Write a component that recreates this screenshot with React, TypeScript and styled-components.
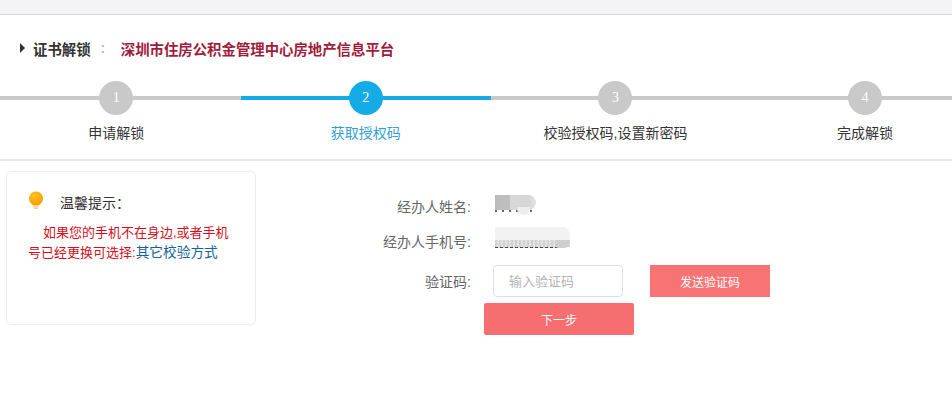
import React from 'react';
import styled, { createGlobalStyle } from 'styled-components';

const FONT = '"Liberation Sans", "Noto Sans CJK SC", sans-serif';

const Global = createGlobalStyle`
  html, body { margin: 0; padding: 0; background: #fff; }
  body { font-family: ${FONT}; overflow: hidden; }
  * { box-sizing: border-box; }
`;

const Page = styled.div`
  width: 952px;
  height: 411px;
  overflow: hidden;
`;

const TopStrip = styled.div`
  height: 15px;
  background: #f3f3f8;
  border-bottom: 1px solid #d6d6de;
`;

const TitleRow = styled.div`
  display: flex;
  align-items: center;
  height: 24px;
  margin-top: 21px;
  padding-left: 20px;
`;

const Arrow = styled.span`
  width: 0;
  height: 0;
  border-left: 5px solid #333;
  border-top: 5px solid transparent;
  border-bottom: 5px solid transparent;
  margin-right: 8px;
`;

const TitleText = styled.span`
  font-size: 14.4px;
  font-weight: 700;
  color: #333;
`;

const Colon = styled.span`
  font-size: 14px;
  font-weight: 700;
  color: #bbb;
  margin: 0 15.5px 0 10px;
`;

const PlatformName = styled.span`
  font-size: 14.4px;
  font-weight: 700;
  color: #a01c3c;
`;

const Steps = styled.div`
  display: flex;
  width: 1000px;
  margin: 21px 0 0 -8.7px;
  height: 80px;
  border-bottom: 2px solid #e6e6e6;
`;

const Step = styled.div<{ $active?: boolean }>`
  width: 249.67px;
  display: flex;
  flex-direction: column;
  align-items: center;
  background: linear-gradient(${p => (p.$active ? '#14ace6' : '#c9c9c9')}, ${p => (p.$active ? '#14ace6' : '#c9c9c9')}) no-repeat 0 15px / 100% 4px;
`;

const StepNumber = styled.div<{ $active?: boolean }>`
  width: 34px;
  height: 34px;
  border-radius: 50%;
  background: ${p => (p.$active ? '#14ace6' : '#c9c9c9')};
  color: #fff;
  font-family: "Liberation Serif", serif;
  font-size: 14px;
  line-height: 33px;
  text-align: center;
`;

const StepLabel = styled.div<{ $active?: boolean }>`
  margin-top: 8px;
  font-size: 14px;
  line-height: 20px;
  color: ${p => (p.$active ? '#2fa3cf' : '#333')};
`;

const Main = styled.div`
  display: flex;
  align-items: flex-start;
  padding: 10px 0 0 6px;
`;

const TipCard = styled.div`
  width: 250px;
  height: 154px;
  border: 1px solid #ececec;
  border-radius: 5px;
  padding: 19px 21px 0;
  flex-shrink: 0;
`;

const TipHead = styled.div`
  display: flex;
  align-items: flex-start;
  font-size: 14px;
  line-height: 24px;
  color: #333;
  gap: 16px;
  margin-bottom: 8px;
`;

const TipBody = styled.p`
  margin: 0;
  width: 204px;
  font-size: 13px;
  line-height: 20px;
  text-indent: 15px;
  color: #d40f1c;
`;

const TipLink = styled.a`
  display: inline-block;
  text-indent: 0;
  color: #17629c;
  font-size: 13.7px;
`;

const Form = styled.div`
  display: grid;
  grid-template-columns: 215px auto auto;
  grid-template-rows: 30px 40px 40px 36px;
  align-items: center;
  margin-top: 20px;
`;

const Label = styled.div`
  font-size: 14px;
  color: #666;
  text-align: right;
  grid-column: 1;
`;

const Value = styled.div<{ $lift: number }>`
  grid-column: 2 / span 2;
  margin: -${p => p.$lift}px 0 0 24px;
`;

/* blurred-out personal data, the reference only shows smudges here */
const Redacted = styled.div<{ $w: number; $h: number }>`
  position: relative;
  width: ${p => p.$w}px;
  height: ${p => p.$h}px;
  overflow: hidden;
`;

const NameBlur = styled.div`
  position: absolute;
  left: 0;
  right: 0;
  top: 0;
  height: 15px;
  border-radius: 0 8px 8px 0;
  background: linear-gradient(90deg, #bcbcbc 0, #c0c0c0 36%, #d8d8d8 38%, #d6d6d6 82%, #e4e4e4 100%);
`;

const NameDots = styled.div`
  position: absolute;
  left: 0;
  right: 0;
  top: 15px;
  height: 2px;
  background: repeating-linear-gradient(90deg, #666 0 2px, #fff 2px 7px);
`;

const NameFade = styled.div`
  position: absolute;
  right: 6px;
  top: 12px;
  width: 13px;
  height: 8px;
  border-radius: 0 0 7px 7px;
  background: #ededed;
`;

const PhoneBlur = styled.div`
  position: absolute;
  left: 0;
  right: 0;
  top: 0;
  height: 13px;
  border-radius: 0 8px 0 0;
  background: #f2f2f2;
`;

const PhoneSmear = styled.div`
  position: absolute;
  left: 0;
  right: 0;
  top: 13px;
  height: 7px;
  background: repeating-linear-gradient(90deg, #d2d2d2 0 2px, #e2e2e2 2px 4px);
`;

const PhoneDots = styled.div`
  position: absolute;
  left: 0;
  right: 12px;
  top: 20px;
  height: 1px;
  background: repeating-linear-gradient(90deg, #444 0 3px, #ddd 3px 5px);
`;

const PhoneEnd = styled.div`
  position: absolute;
  right: 0;
  top: 13px;
  width: 15px;
  height: 8px;
  border-radius: 0 0 6px 4px;
  background: #cfcfcf;
`;

const CodeInput = styled.input`
  grid-column: 2;
  margin-left: 22px;
  width: 130px;
  height: 32px;
  border: 1px solid #dedee6;
  border-radius: 4px;
  padding: 0 15px;
  font-family: ${FONT};
  font-size: 13px;
  outline: none;
  &::placeholder { color: #b4b4b4; }
`;

const SendButton = styled.button`
  grid-column: 3;
  margin-left: 27px;
  width: 120px;
  height: 32px;
  border: 0;
  background: #f87373;
  color: #fff;
  font-family: ${FONT};
  font-size: 12px;
  padding: 0;
`;

const NextButton = styled.button`
  grid-column: 2 / span 2;
  justify-self: start;
  margin-left: 13px;
  width: 150px;
  height: 32px;
  border: 0;
  border-radius: 2px;
  background: #f76e71;
  color: #fff;
  font-family: ${FONT};
  font-size: 12px;
  padding: 0;
`;

const Bulb = () => (
  <svg width="16" height="18" viewBox="0 0 18 20" style={{ flexShrink: 0 }}>
    <defs>
      <radialGradient id="bulbGlow" cx="40%" cy="30%" r="70%">
        <stop offset="0%" stopColor="#ffc21f" />
        <stop offset="100%" stopColor="#fb9c04" />
      </radialGradient>
    </defs>
    <path d="M9 0.5a7.8 7.8 0 0 1 4.6 14.1c-.6.5-.9 1-1 1.6H5.4c-.1-.6-.4-1.1-1-1.6A7.8 7.8 0 0 1 9 .5z" fill="url(#bulbGlow)" />
    <path d="M6 17h6v1.3H6zM7 18.7h4V20H7z" fill="#f3c98a" />
  </svg>
);

const STEPS = ['申请解锁', '获取授权码', '校验授权码,设置新密码', '完成解锁'];

export default function App() {
  return (
    <Page>
      <Global />
      <TopStrip />
      <TitleRow>
        <Arrow />
        <TitleText>证书解锁</TitleText>
        <Colon>:</Colon>
        <PlatformName>深圳市住房公积金管理中心房地产信息平台</PlatformName>
      </TitleRow>
      <Steps>
        {STEPS.map((label, i) => (
          <Step key={label} $active={i === 1}>
            <StepNumber $active={i === 1}>{i + 1}</StepNumber>
            <StepLabel $active={i === 1}>{label}</StepLabel>
          </Step>
        ))}
      </Steps>
      <Main>
        <TipCard>
          <TipHead>
            <Bulb />
            <span>温馨提示：</span>
          </TipHead>
          <TipBody>
            如果您的手机不在身边,或者手机号已经更换可选择:<TipLink>其它校验方式</TipLink>
          </TipBody>
        </TipCard>
        <Form>
          <Label>经办人姓名:</Label>
          <Value $lift={2}>
            <Redacted $w={41} $h={20}>
              <NameBlur />
              <NameDots />
              <NameFade />
            </Redacted>
          </Value>
          <Label>经办人手机号:</Label>
          <Value $lift={7}>
            <Redacted $w={75} $h={21}>
              <PhoneBlur />
              <PhoneSmear />
              <PhoneDots />
              <PhoneEnd />
            </Redacted>
          </Value>
          <Label>验证码:</Label>
          <CodeInput placeholder="输入验证码" />
          <SendButton>发送验证码</SendButton>
          <NextButton>下一步</NextButton>
        </Form>
      </Main>
    </Page>
  );
}
